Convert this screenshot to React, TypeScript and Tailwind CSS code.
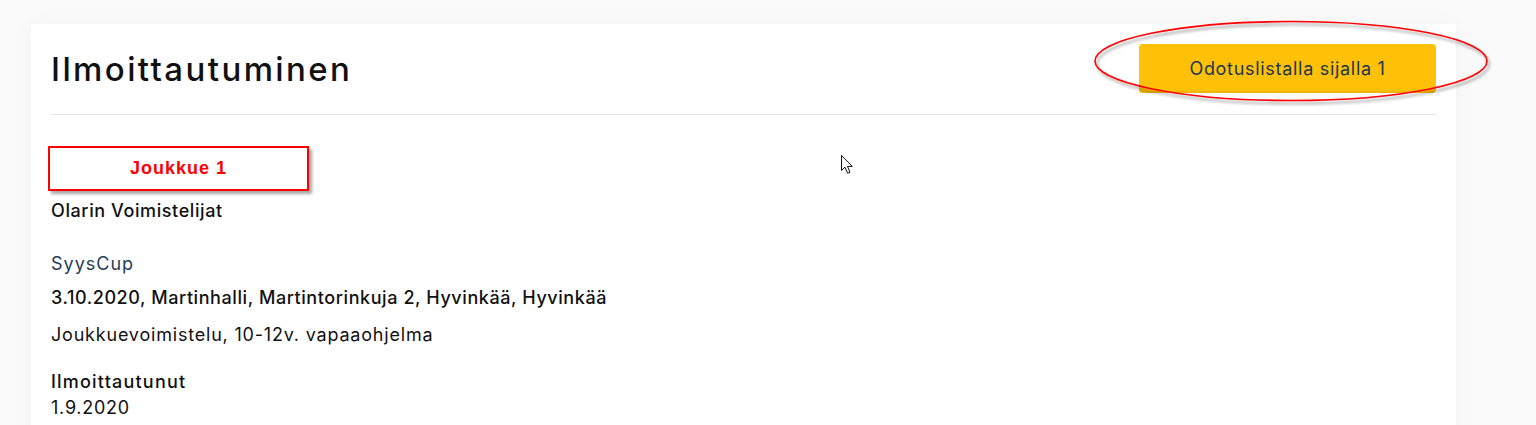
import React from "react";

// Registration detail card with reviewer annotations on top

const font = { fontFamily: "Inter, 'Noto Sans', sans-serif" };

function Cursor() {
  return (
    <svg
      className="absolute left-[841px] top-[155px] pointer-events-none"
      width="14"
      height="20"
      viewBox="0 0 14 20"
    >
      <path
        d="M0.5 0.5 L0.5 15.5 L4 12.2 L6.6 18.3 L9 17.3 L6.5 11.4 L11.3 11.4 Z"
        fill="#fff"
        stroke="#111"
        strokeWidth="1"
        strokeLinejoin="round"
      />
    </svg>
  );
}

function Ellipse() {
  return (
    <svg
      className="absolute left-[1090px] top-[18px] pointer-events-none"
      width="410"
      height="94"
      viewBox="0 0 410 94"
    >
      <defs>
        <filter id="sh" x="-10%" y="-30%" width="120%" height="160%">
          <feDropShadow dx="2" dy="3" stdDeviation="1.8" floodColor="#000" floodOpacity="0.4" />
        </filter>
      </defs>
      <ellipse
        cx="201"
        cy="43"
        rx="196"
        ry="39.5"
        fill="none"
        stroke="#ff0000"
        strokeWidth="1.6"
        filter="url(#sh)"
      />
    </svg>
  );
}

export default function App() {
  return (
    <div className="relative h-[425px] bg-[#fafafa] overflow-hidden" style={font}>
      <div className="ml-[31px] mt-[24px] w-[1425px] bg-white px-5 pb-10 shadow-[0_0_18px_rgba(0,0,0,0.035)]">
        {/* Header */}
        <div className="flex items-center justify-between border-b border-[#e3e3e3] pt-5 pb-[21px]">
          <h1 className="text-[33px] leading-[40px] font-medium text-[#111] tracking-[2.4px]">
            Ilmoittautuminen
          </h1>
          <button className="h-[49px] w-[297px] rounded-[4px] bg-[#ffc107] text-[18px] tracking-[0.7px] text-[#1c3553] shadow-[inset_0_-2px_0_rgba(0,0,0,0.06)]">
            Odotuslistalla sijalla 1
          </button>
        </div>

        {/* Body */}
        <div className="pt-[57px] text-[18px] leading-[26px] text-[#111] tracking-[0.75px]">
          <div className="font-medium tracking-[0.6px]">Joukkue</div>
          <div className="font-medium tracking-[0.6px]">Olarin Voimistelijat</div>

          <div className="mt-[27px] text-[#1f3d5c] tracking-[1px]">SyysCup</div>
          <div className="mt-[8px] font-medium tracking-[0.58px]">
            3.10.2020, Martinhalli, Martintorinkuja 2, Hyvinkää, Hyvinkää
          </div>
          <div className="mt-[11px] tracking-[0.8px]">Joukkuevoimistelu, 10-12v. vapaaohjelma</div>

          <div className="mt-[21px] font-medium tracking-[1.2px]">Ilmoittautunut</div>
          <div>1.9.2020</div>
        </div>
      </div>

      {/* Annotations */}
      <div className="absolute left-[48px] top-[146px] flex h-[45px] w-[261px] items-center justify-center border-2 border-[#ff0000] bg-white shadow-[3px_3px_3px_rgba(0,0,0,0.35)]">
        <span
          className="text-[18px] font-bold tracking-[1px] text-[#ff0000]"
          style={{ fontFamily: "'Liberation Sans', Arial, sans-serif" }}
        >
          Joukkue 1
        </span>
      </div>
      <Ellipse />
      <Cursor />
    </div>
  );
}
